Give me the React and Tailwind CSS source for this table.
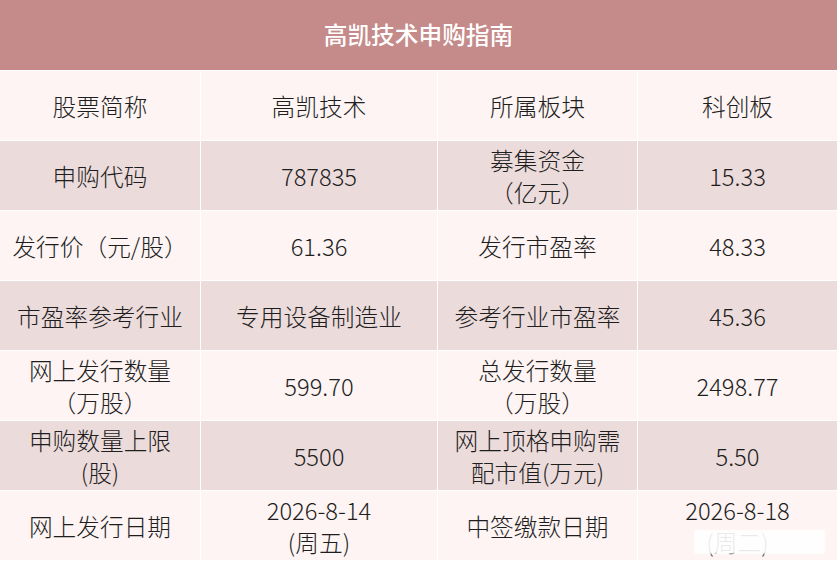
const rows = [
  { bg: "bg-[#fdf4f3]", cells: [["股票简称"], ["高凯技术"], ["所属板块"], ["科创板"]] },
  { bg: "bg-[#ecdbdb]", cells: [["申购代码"], ["787835"], ["募集资金", "（亿元）"], ["15.33"]] },
  { bg: "bg-[#fdf4f3]", cells: [["发行价（元/股）"], ["61.36"], ["发行市盈率"], ["48.33"]] },
  { bg: "bg-[#ecdbdb]", cells: [["市盈率参考行业"], ["专用设备制造业"], ["参考行业市盈率"], ["45.36"]] },
  { bg: "bg-[#fdf4f3]", cells: [["网上发行数量", "（万股）"], ["599.70"], ["总发行数量", "（万股）"], ["2498.77"]] },
  { bg: "bg-[#ecdbdb]", cells: [["申购数量上限", "(股)"], ["5500"], ["网上顶格申购需", "配市值(万元)"], ["5.50"]] },
  { bg: "bg-[#fdf4f3]", cells: [["网上发行日期"], ["2026-8-14", "(周五)"], ["中签缴款日期"], ["2026-8-18", "(周二)"]] },
];

const colWidths = ["w-[200px]", "w-[237px]", "w-[200px]", "flex-1"];

export default function App() {
  return (
    <div
      className="w-[837px] h-[561px] bg-white text-[#1e1e1e] overflow-hidden"
      style={{ fontFamily: '"Noto Sans CJK SC", "Noto Sans", sans-serif' }}
    >
      {/* 标题 */}
      <div className="h-[70px] bg-[#c58a8a] flex items-center justify-center text-white text-[23.7px] font-medium">
        高凯技术申购指南
      </div>

      {/* 表格 */}
      <div className="flex flex-col">
        {rows.map((row, i) => (
          <div key={i} className="flex h-[70px] border-t border-white">
            {row.cells.map((lines, j) => (
              <div
                key={j}
                className={`${colWidths[j]} ${row.bg} ${j > 0 ? "border-l border-white" : ""} flex flex-col items-center justify-center text-[23.7px] leading-[32px] font-light text-center`}
              >
                {lines.map((t, k) =>
                  i === 6 && j === 3 && k === 1 ? (
                    // 水印遮住的部分
                    <span key={k} className="relative whitespace-nowrap">
                      {t}
                      <span className="absolute -left-3 -right-14 top-1 bottom-1 bg-white/90 blur-[1px]" />
                    </span>
                  ) : (
                    <span key={k} className="whitespace-nowrap">
                      {t}
                    </span>
                  )
                )}
              </div>
            ))}
          </div>
        ))}
      </div>
    </div>
  );
}
